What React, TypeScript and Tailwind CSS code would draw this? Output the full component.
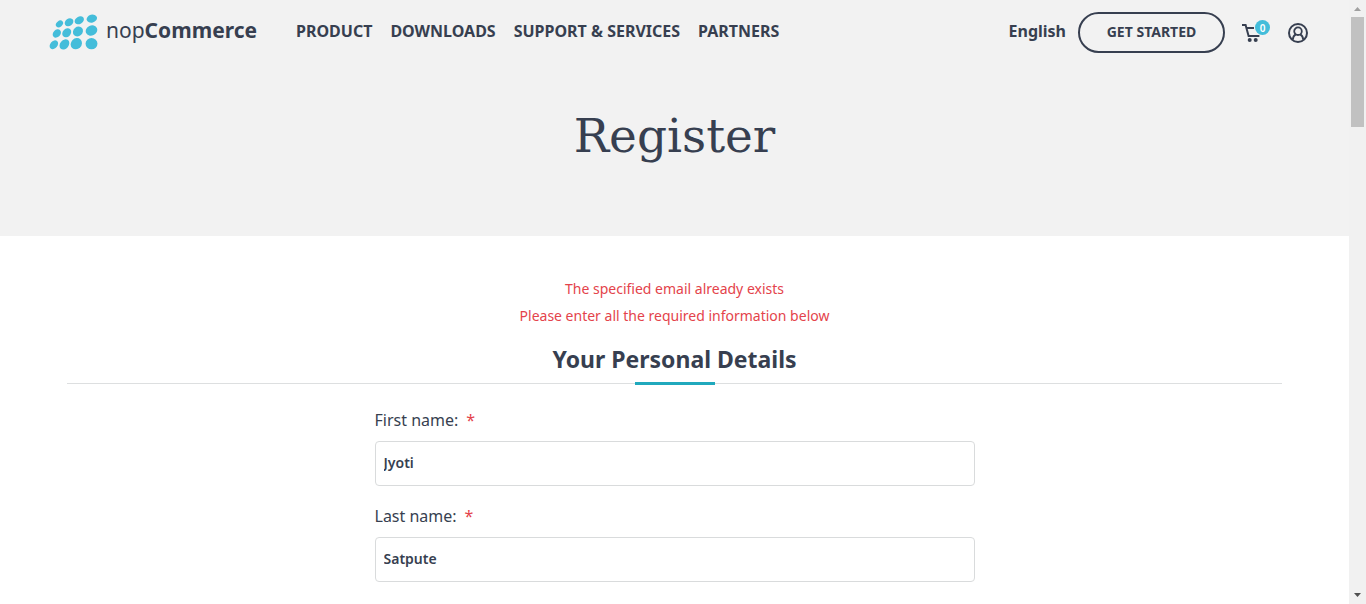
import { useState } from "react";

const logoDots = [
  [59, 58, 12, 9, -40],
  [88, 53, 14, 11, -35],
  [119, 47, 15, 11, -30],
  [157, 42, 16, 12, -15],
  [51, 87, 14, 11, -45],
  [81, 85, 15, 12, -45],
  [115, 81, 16, 14, -40],
  [156, 78, 18, 15, -25],
  [42, 121, 15, 11, -50],
  [74, 120, 17, 13, -50],
  [110, 118, 18, 16, -45],
  [156, 118, 18, 17, 0],
];

const navLinks = ["PRODUCT", "DOWNLOADS", "SUPPORT & SERVICES", "PARTNERS"];

function Logo() {
  return (
    <a href="#home" className="flex w-[210px] shrink-0 items-start gap-2">
      <svg viewBox="28 28 147 109" className="mt-0.5 h-9 w-[49px] shrink-0" fill="#44bdda" aria-hidden="true">
        {logoDots.map(([x, y, rx, ry, angle]) => (
          <ellipse key={`${x}-${y}`} cx={x} cy={y} rx={rx} ry={ry} transform={`rotate(${angle} ${x} ${y})`} />
        ))}
      </svg>
      <span className="text-[21px] leading-9">
        nop<b>Commerce</b>
      </span>
    </a>
  );
}

function Header() {
  return (
    <header className="flex items-start pt-3 pr-[41px] pl-[49px]">
      <Logo />
      <nav className="ml-[37px] flex gap-[18px] text-base leading-[38px] font-bold whitespace-nowrap">
        {navLinks.map((label) => (
          <a key={label} href="#menu">
            {label}
          </a>
        ))}
      </nav>
      <div className="ml-auto flex items-start">
        <a href="#language" className="mr-3 text-base leading-[38px] font-bold">
          English
        </a>
        <a
          href="#get-started"
          className="flex h-[41px] w-[147px] items-center justify-center rounded-full border-2 border-[#373f50] pb-0.5 text-sm font-bold whitespace-nowrap"
        >
          GET STARTED
        </a>
        <a href="#cart" aria-label="Shopping cart" className="relative mt-[11px] ml-[17px] block h-5 w-7">
          <svg viewBox="0 0 28 20" className="h-5 w-7" fill="none" stroke="#373f50" strokeWidth="2" aria-hidden="true">
            <path d="M0 2h3.6L6.6 13H17.4M5 5h7" />
            <circle cx="7.7" cy="17" r="2" fill="#373f50" stroke="none" />
            <circle cx="13.7" cy="17" r="2" fill="#373f50" stroke="none" />
          </svg>
          <span className="absolute -top-[3px] right-0 flex size-[15px] items-center justify-center rounded-full bg-[#44bdda] text-[10px] leading-4 font-semibold text-white">
            0
          </span>
        </a>
        <a href="#account" aria-label="My account" className="mt-[11px] ml-[18px] block">
          <svg viewBox="0 0 20 20" className="size-5" fill="none" stroke="#373f50" strokeWidth="2" aria-hidden="true">
            <circle cx="10" cy="10" r="9" />
            <circle cx="10" cy="8.2" r="3.8" strokeWidth="1.8" />
            <path d="M4.8 16.6C5 13.8 6.2 12.3 7.8 11.4M15.2 16.6C15 13.8 13.8 12.3 12.2 11.4" strokeWidth="1.8" />
          </svg>
        </a>
      </div>
    </header>
  );
}

function Field({ id, label, initial }: { id: string; label: string; initial: string }) {
  const [value, setValue] = useState(initial);
  return (
    <div className="mb-[15px]">
      <div className="flex h-9 items-center gap-2 pb-1.5 text-base">
        <label htmlFor={id}>{label}</label>
        <span className="text-[#e4434b]">*</span>
      </div>
      <input
        id={id}
        type="text"
        value={value}
        onChange={(event) => setValue(event.target.value)}
        className="block h-[45px] w-full rounded border border-[#d9dbdc] bg-white px-2 pb-0.5 text-sm font-semibold outline-none"
      />
    </div>
  );
}

function ScrollRail() {
  return (
    <div aria-hidden="true" className="sticky top-0 flex h-screen w-[17px] shrink-0 flex-col items-center bg-[#f1f1f1]">
      <svg viewBox="0 0 17 17" className="size-[17px]" fill="#a0a0a0">
        <path d="M5 11 8.5 7 12 11z" />
      </svg>
      <div className="h-[110px] w-[13px] bg-[#c1c1c1]" />
      <svg viewBox="0 0 17 17" className="mt-auto size-[17px]" fill="#505050">
        <path d="M5 6h7L8.5 10z" />
      </svg>
    </div>
  );
}

export default function App() {
  return (
    <div className="flex bg-white font-['Noto_Sans',sans-serif] text-[#373f50]">
      <div className="min-w-0 flex-1">
        <div className="bg-[#f2f2f2] pb-[66px]">
          <Header />
          <h1 className="mt-[49px] text-center font-['DejaVu_Serif',serif] text-[47px] leading-[68px]">Register</h1>
        </div>
        <main className="px-[67px] pt-[39px]">
          <div className="text-center text-sm leading-[27px] text-[#e4434b]">
            <p>The specified email already exists</p>
            <p>Please enter all the required information below</p>
          </div>
          <section>
            <div className="mt-3 flex flex-col items-center border-b border-[#dddfe0]">
              <h2 className="pb-[5px] text-[23px] leading-9 font-bold">Your Personal Details</h2>
              <span className="-mb-0.5 h-[3px] w-20 bg-[#20a9bd]" />
            </div>
            <form className="mx-auto mt-[21px] max-w-[600px]">
              <Field id="first-name" label="First name:" initial="Jyoti" />
              <Field id="last-name" label="Last name:" initial="Satpute" />
            </form>
          </section>
        </main>
      </div>
      <ScrollRail />
    </div>
  );
}
